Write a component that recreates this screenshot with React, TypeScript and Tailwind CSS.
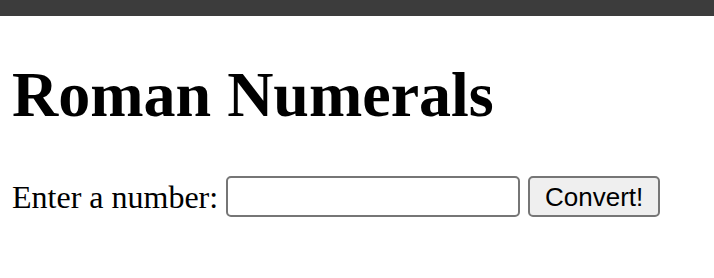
export default function App() {
  return (
    <div className="min-h-screen bg-white text-black">
      <div className="h-4 w-full bg-[#3c3c3c]" />
      <div className="px-3">
        <h1 className="mt-[43px] text-[64px] font-bold leading-[71px] text-black" style={{ fontFamily: '"Liberation Serif", "Times New Roman", serif' }}>
          Roman Numerals
        </h1>
        <div className="mt-[46px] flex items-center gap-2">
          <label className="text-[32px] leading-8 text-black" style={{ fontFamily: '"Liberation Serif", "Times New Roman", serif' }}>
            Enter a number:
          </label>
          <input
            type="text"
            className="h-[41px] w-[294px] rounded-[5px] border-2 border-[#767676] bg-white px-2 text-[26px] outline-none"
          />
          <button
            className="h-[41px] w-[132px] rounded-[5px] border-2 border-[#767676] bg-[#efefef] text-[26px] leading-none text-black"
            style={{ fontFamily: '"Liberation Sans", Arial, sans-serif' }}
          >
            Convert!
          </button>
        </div>
      </div>
    </div>
  );
}
